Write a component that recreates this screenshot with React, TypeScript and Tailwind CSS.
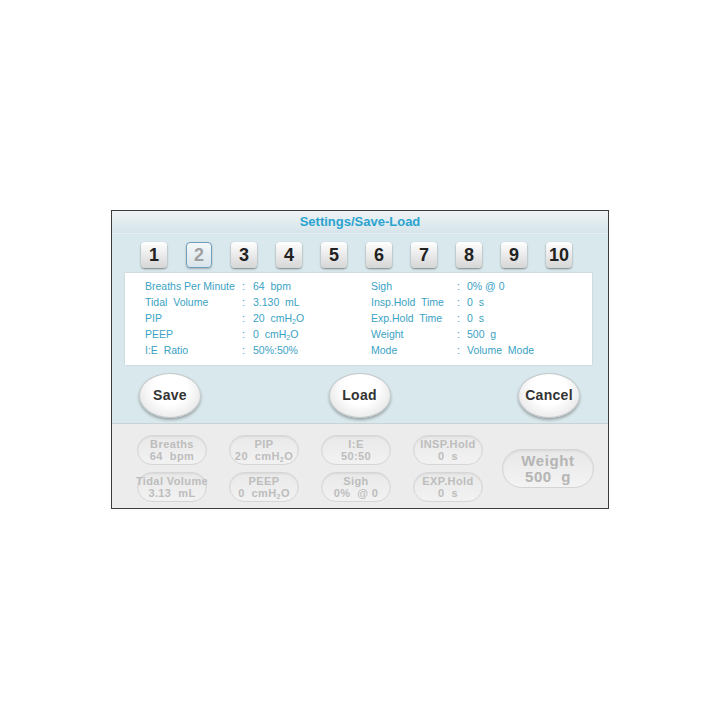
import React from "react";

const slots = ["1", "2", "3", "4", "5", "6", "7", "8", "9", "10"];

function Sub2() {
  return <sub className="text-[7px] leading-none">2</sub>;
}

const leftRows: [string, React.ReactNode][] = [
  ["Breaths Per Minute", "64  bpm"],
  ["Tidal  Volume", "3.130  mL"],
  ["PIP", <>20  cmH<Sub2 />O</>],
  ["PEEP", <>0  cmH<Sub2 />O</>],
  ["I:E  Ratio", "50%:50%"],
];

const rightRows: [string, React.ReactNode][] = [
  ["Sigh", "0% @ 0"],
  ["Insp.Hold  Time", "0  s"],
  ["Exp.Hold  Time", "0  s"],
  ["Weight", "500  g"],
  ["Mode", "Volume  Mode"],
];

const pills: [string, React.ReactNode][][] = [
  [
    ["Breaths", "64  bpm"],
    ["Tidal Volume", "3.13  mL"],
  ],
  [
    ["PIP", <>20  cmH<Sub2 />O</>],
    ["PEEP", <>0  cmH<Sub2 />O</>],
  ],
  [
    ["I:E", "50:50"],
    ["Sigh", "0%  @ 0"],
  ],
  [
    ["INSP.Hold", "0  s"],
    ["EXP.Hold", "0  s"],
  ],
];

function SlotButton({ label, active }: { label: string; active?: boolean }) {
  return (
    <div
      className={
        active
          ? "flex h-[26px] w-[26px] items-center justify-center rounded-[4px] border border-[#6f9fbd] bg-gradient-to-b from-[#f4f8fa] to-[#d9e4ea] text-[18px] font-bold text-[#a0a0a0] shadow-[0_1px_2px_rgba(0,0,0,0.25)]"
          : "flex h-[26px] w-[26px] items-center justify-center rounded-[4px] bg-gradient-to-b from-white to-[#d6d6d6] text-[18px] font-bold text-[#222] shadow-[0_1px_2px_rgba(0,0,0,0.45)]"
      }
    >
      {label}
    </div>
  );
}

function OvalButton({ label }: { label: string }) {
  return (
    <div className="flex h-[45px] w-[62px] items-center justify-center rounded-[50%] border border-[#c4c9cb] bg-[radial-gradient(ellipse_at_50%_35%,#ffffff_40%,#dcdcdc_100%)] text-[14px] font-bold tracking-[0.3px] text-[#333] shadow-[0_2px_3px_rgba(0,0,0,0.3)]">
      {label}
    </div>
  );
}

function Pill({ title, value }: { title: string; value: React.ReactNode }) {
  return (
    <div className="flex h-[30px] w-[70px] flex-col items-center justify-center rounded-full border border-[#d6d6d6] bg-gradient-to-b from-[#e9e9e9] to-[#f2f2f2] text-[11px] font-bold leading-[12px] tracking-[0.4px] text-[#bdbdbd] shadow-[inset_0_1px_2px_rgba(0,0,0,0.08)]">
      <span className="whitespace-pre">{title}</span>
      <span className="whitespace-pre">{value}</span>
    </div>
  );
}

export default function App() {
  return (
    <div className="h-[720px] w-[720px] bg-white pl-[111px] pt-[210px] font-['Liberation_Sans',Arial,sans-serif]">
      <div className="flex h-[299px] w-[498px] flex-col border border-[#3c3c3c] bg-[#d9e8ec]">
        <div className="flex h-[23px] items-center justify-center border-b border-[#e6eef1] bg-gradient-to-b from-[#eef3f5] to-[#d6e5ea] text-[13px] font-bold text-[#2ba4cf]">
          Settings/Save-Load
        </div>

        <div className="flex gap-[19px] pl-[29px] pt-[8px]">
          {slots.map((s) => (
            <SlotButton key={s} label={s} active={s === "2"} />
          ))}
        </div>

        <div className="ml-[13px] mt-[5px] flex h-[92px] w-[467px] bg-white pt-[5px] text-[10.5px] leading-[16px] text-[#3aa2c4] shadow-[0_0_2px_rgba(0,0,0,0.15)]">
          <div className="flex flex-col pl-[20px]">
            {leftRows.map(([k, v]) => (
              <div key={k} className="flex">
                <span className="w-[97px] whitespace-pre">{k}</span>
                <span className="w-[11px]">:</span>
                <span className="whitespace-pre">{v}</span>
              </div>
            ))}
          </div>
          <div className="ml-auto flex w-[221px] flex-col">
            {rightRows.map(([k, v]) => (
              <div key={k} className="flex">
                <span className="w-[86px] whitespace-pre">{k}</span>
                <span className="w-[10px]">:</span>
                <span className="whitespace-pre">{v}</span>
              </div>
            ))}
          </div>
        </div>

        <div className="flex justify-between pl-[27px] pr-[28px] pt-[8px]">
          <OvalButton label="Save" />
          <OvalButton label="Load" />
          <OvalButton label="Cancel" />
        </div>

        <div className="mt-[5px] flex flex-1 items-center border-t border-[#c9d3d6] bg-[#ececec] pl-[25px] pt-[5px]">
          <div className="flex gap-[22px]">
            {pills.map((col, i) => (
              <div key={i} className="flex flex-col gap-[7px]">
                {col.map(([t, v]) => (
                  <Pill key={t} title={t} value={v} />
                ))}
              </div>
            ))}
          </div>
          <div className="ml-[19px] flex h-[39px] w-[92px] flex-col items-center justify-center rounded-full border border-[#d4d4d4] bg-gradient-to-b from-[#e8e8e8] to-[#f3f3f3] text-[15px] font-bold leading-[16px] tracking-[0.6px] text-[#b5b5b5] shadow-[inset_0_1px_2px_rgba(0,0,0,0.08)]">
            <span>Weight</span>
            <span className="whitespace-pre">500  g</span>
          </div>
        </div>
      </div>
    </div>
  );
}
